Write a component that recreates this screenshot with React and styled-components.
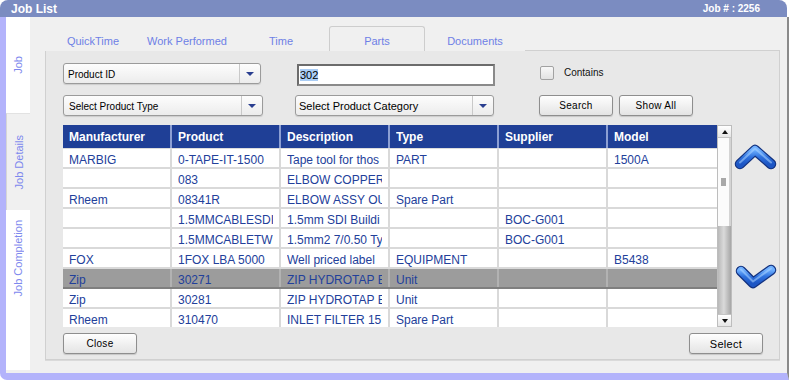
import React from 'react';
import styled, { createGlobalStyle } from 'styled-components';

const Global = createGlobalStyle`
  html, body { margin: 0; padding: 0; background: #ffffff; }
  body { font-family: "Liberation Sans", Arial, sans-serif; }
  * { box-sizing: border-box; }
`;

const Window = styled.div`
  width: 789px;
  height: 380px;
  display: flex;
  flex-direction: column;
`;

const TitleBar = styled.div`
  height: 17px;
  flex: none;
  background: #7b8cc1;
  border-radius: 8px 8px 0 0;
  margin-right: 2px;
  display: flex;
  align-items: center;
  justify-content: space-between;
  padding: 0 27px 0 11px;
  color: #ffffff;
  font-weight: bold;
`;

const Title = styled.span`
  font-size: 12px;
`;

const JobNo = styled.span`
  font-size: 10px;
`;

const Body = styled.div`
  flex: 1;
  display: flex;
  border-left: 6px solid #b3b3fb;
  border-bottom: 7px solid #b3b3fb;
  border-right: 2px solid #8a8a8a;
  border-bottom-left-radius: 7px;
  overflow: hidden;
`;

const SideTabs = styled.div`
  width: 24px;
  flex: none;
  background: #ffffff;
  display: flex;
  flex-direction: column;
`;

const SideTab = styled.div`
  height: ${p => p.$h}px;
  display: flex;
  align-items: center;
  justify-content: center;
  background: ${p => (p.$active ? '#f0f0f0' : '#ffffff')};
  border-left: ${p => (p.$active ? '1px solid #d6d6d6' : 'none')};
  border-top: ${p => (p.$active ? '1px solid #e2e2e2' : 'none')};
`;

const SideLabel = styled.span`
  writing-mode: vertical-rl;
  transform: rotate(180deg);
  font-size: 11px;
  color: #7d88ee;
  white-space: nowrap;
`;

const SideFill = styled.div`
  flex: 1;
  border-bottom: 3px solid #f0f0f0;
`;

const Content = styled.div`
  flex: 1;
  min-width: 0;
  background: #f0f0f0;
  padding: 9px 7px 13px 15px;
  display: flex;
  flex-direction: column;
`;

const TopTabs = styled.div`
  height: 24px;
  display: flex;
  flex: none;
`;

const TopTab = styled.div`
  width: ${p => p.$w}px;
  height: 25px;
  padding-top: 3px;
  display: flex;
  align-items: center;
  justify-content: center;
  font-size: 11px;
  color: #6e80e6;
  background: #f0f0f0;
  border: ${p => (p.$active ? '1px solid #cdcdcd' : '1px solid transparent')};
  border-bottom: none;
  border-radius: 3px 3px 0 0;
  position: relative;
  z-index: 1;
`;

const Panel = styled.div`
  flex: 1;
  background: #e8e8e8;
  border: 1px solid #d0d0d0;
  box-shadow: 0 1px 0 #dadada;
  padding: 12px 0 0 17px;
  display: flex;
  flex-direction: column;
`;

const Controls = styled.div`
  display: grid;
  grid-template-columns: 200px 200px 1fr;
  grid-template-rows: 23px 21px;
  column-gap: 32px;
  row-gap: 9px;
`;

const Cell = styled.div`
  display: flex;
  align-items: flex-start;
  padding-left: ${p => p.$pl || 0}px;
  gap: ${p => p.$gap || 0}px;
`;

const SelectBox = styled.div`
  width: ${p => p.$w}px;
  height: 21px;
  display: flex;
  border: 1px solid #9b9b9b;
  border-radius: 3px;
  background: linear-gradient(#fdfdfd, #ececec);
  box-shadow: 0 1px 1px rgba(0, 0, 0, 0.12);
`;

const SelectText = styled.div`
  flex: 1;
  display: flex;
  align-items: center;
  padding-left: ${p => p.$pl || 4}px;
  padding-top: 1px;
  font-size: ${p => p.$fs || 10}px;
  color: #000;
  white-space: nowrap;
`;

const SelectArrow = styled.div`
  width: 21px;
  border-left: 1px solid #c9c9c9;
  display: flex;
  align-items: center;
  justify-content: center;
  &::after {
    content: '';
    border-left: 4px solid transparent;
    border-right: 4px solid transparent;
    border-top: 4px solid #2a3f90;
  }
`;

const TextInput = styled.div`
  width: 200px;
  height: 22px;
  margin: 1px 0 0 2px;
  border: 2px solid #6c6c6c;
  border-right-color: #8a8a8a;
  border-bottom-color: #8a8a8a;
  background: #ffffff;
  display: flex;
  align-items: center;
  padding-left: 1px;
  font-size: 11px;
  color: #000;
`;

const Selected = styled.span`
  background: #aacdf5;
  line-height: 12px;
`;

const Check = styled.div`
  width: 14px;
  height: 14px;
  margin-top: 3px;
  border: 1px solid #a2a2a2;
  border-radius: 2px;
  background: linear-gradient(#f8f8f8, #e2e2e2);
`;

const CheckLabel = styled.span`
  font-size: 10px;
  margin-top: 4px;
  color: #111;
`;

const Button = styled.button`
  width: 74px;
  height: 21px;
  padding: 0;
  border: 1px solid #8e8e8e;
  border-radius: 3px;
  background: linear-gradient(#fefefe, #e4e4e4);
  box-shadow: 0 1px 1px rgba(0, 0, 0, 0.15);
  font-family: "Liberation Sans", Arial, sans-serif;
  font-size: ${p => p.$fs || 10}px;
  color: #000;
  letter-spacing: 0.3px;
`;

const TableArea = styled.div`
  margin-top: 9px;
  height: 202px;
  display: flex;
`;

const Table = styled.div`
  width: 654px;
  height: 202px;
  flex: none;
  overflow: hidden;
  background: #d9d9d9;
`;

const Row = styled.div`
  display: grid;
  grid-template-columns: repeat(6, 109px);
  height: ${p => (p.$head ? 24 : 20)}px;
  background: ${p => (p.$head ? '#1f3f96' : p.$sel ? '#9c9c9c' : '#ffffff')};
  border-bottom: ${p => (p.$head ? '1px solid #dcdcdc' : p.$sel ? '2px solid #7f7f7f' : '2px solid #d9d9d9')};
`;

const Td = styled.div`
  padding: ${p => (p.$head ? '0 6px' : '3px 6px 0')};
  display: flex;
  align-items: center;
  min-width: 0;
  font-size: 12px;
  color: ${p => (p.$head ? '#ffffff' : '#22409a')};
  font-weight: ${p => (p.$head ? 'bold' : 'normal')};
  border-right: 2px solid ${p => (p.$head ? '#8c9fd3' : p.$sel ? '#b2b2b2' : '#d9d9d9')};
  &:last-child { border-right: none; }
`;

const CellText = styled.span`
  display: block;
  width: 100%;
  overflow: hidden;
  white-space: nowrap;
`;

const Scrollbar = styled.div`
  width: 15px;
  height: 202px;
  flex: none;
  display: flex;
  flex-direction: column;
  border: 1px solid #bdbdbd;
  background: #f6f6f6;
`;

const ScrollBtn = styled.div`
  height: 12px;
  flex: none;
  background: linear-gradient(#ffffff, #e6e6e6);
  border-bottom: ${p => (p.$down ? 'none' : '1px solid #c4c4c4')};
  border-top: ${p => (p.$down ? '1px solid #c4c4c4' : 'none')};
  display: flex;
  align-items: center;
  justify-content: center;
  &::after {
    content: '';
    border-left: 3px solid transparent;
    border-right: 3px solid transparent;
    ${p => (p.$down ? 'border-top: 4px solid #111;' : 'border-bottom: 4px solid #111;')}
  }
`;

const Thumb = styled.div`
  height: 88px;
  flex: none;
  background: #fbfbfb;
  border-right: 2px solid #d4d4d4;
  display: flex;
  align-items: center;
  justify-content: center;
  &::after {
    content: '';
    width: 5px;
    height: 8px;
    background: #a8a8a8;
  }
`;

const Track = styled.div`
  flex: 1;
  background: linear-gradient(90deg, #b8b8b8, #dadada 45%, #a6a6a6);
`;

const Arrows = styled.div`
  width: 46px;
  flex: none;
  margin-left: 1px;
  display: flex;
  flex-direction: column;
  padding-top: 18px;
  gap: 89px;
`;

const Footer = styled.div`
  margin-top: 6px;
  display: flex;
  justify-content: space-between;
  padding-right: 16px;
`;

const Chevron = ({ d, id }) => (
  <svg width="46" height="30" viewBox="0 0 46 30">
    <defs>
      <linearGradient id={id} x1="0" y1="0" x2="0" y2="1">
        <stop offset="0" stopColor="#6fb0ff" />
        <stop offset="0.5" stopColor="#2f72de" />
        <stop offset="1" stopColor="#1d56c4" />
      </linearGradient>
    </defs>
    <path d={d} fill="none" stroke="#13327f" strokeWidth="10.5" strokeLinecap="round" strokeLinejoin="round" />
    <path d={d} fill="none" stroke={`url(#${id})`} strokeWidth="8" strokeLinecap="round" strokeLinejoin="round" />
    <path d={d} fill="none" stroke="#a9d3ff" strokeOpacity="0.55" strokeWidth="2" strokeLinecap="round" strokeLinejoin="round" transform="translate(0,-1.5)" />
  </svg>
);

const rows = [
  ['MARBIG', '0-TAPE-IT-1500', 'Tape tool for thos', 'PART', '', '1500A'],
  ['', '083', 'ELBOW COPPER', '', '', ''],
  ['Rheem', '08341R', 'ELBOW ASSY OU', 'Spare Part', '', ''],
  ['', '1.5MMCABLESDI', '1.5mm SDI Buildi', '', 'BOC-G001', ''],
  ['', '1.5MMCABLETWI', '1.5mm2 7/0.50 Ty', '', 'BOC-G001', ''],
  ['FOX', '1FOX LBA 5000', 'Well priced label', 'EQUIPMENT', '', 'B5438'],
  ['Zip', '30271', 'ZIP HYDROTAP E', 'Unit', '', ''],
  ['Zip', '30281', 'ZIP HYDROTAP E', 'Unit', '', ''],
  ['Rheem', '310470', 'INLET FILTER 15', 'Spare Part', '', ''],
];

const headers = ['Manufacturer', 'Product', 'Description', 'Type', 'Supplier', 'Model'];

const topTabs = [
  ['QuickTime', 96],
  ['Work Performed', 92],
  ['Time', 96],
  ['Parts', 96],
  ['Documents', 100],
];

export default function App() {
  return (
    <>
      <Global />
      <Window>
        <TitleBar>
          <Title>Job List</Title>
          <JobNo>Job # : 2256</JobNo>
        </TitleBar>
        <Body>
          <SideTabs>
            <SideTab $h={96}><SideLabel>Job</SideLabel></SideTab>
            <SideTab $h={97} $active><SideLabel>Job Details</SideLabel></SideTab>
            <SideTab $h={97}><SideLabel>Job Completion</SideLabel></SideTab>
            <SideFill />
          </SideTabs>
          <Content>
            <TopTabs>
              {topTabs.map(([t, w]) => (
                <TopTab key={t} $w={w} $active={t === 'Parts'}>{t}</TopTab>
              ))}
            </TopTabs>
            <Panel>
              <Controls>
                <Cell>
                  <SelectBox $w={198}>
                    <SelectText>Product ID</SelectText>
                    <SelectArrow />
                  </SelectBox>
                </Cell>
                <Cell>
                  <TextInput><Selected>302</Selected></TextInput>
                </Cell>
                <Cell $pl={13} $gap={10}>
                  <Check />
                  <CheckLabel>Contains</CheckLabel>
                </Cell>
                <Cell>
                  <SelectBox $w={200}>
                    <SelectText $pl={5}>Select Product Type</SelectText>
                    <SelectArrow />
                  </SelectBox>
                </Cell>
                <Cell>
                  <SelectBox $w={199}>
                    <SelectText $fs={11} $pl={3}>Select Product Category</SelectText>
                    <SelectArrow />
                  </SelectBox>
                </Cell>
                <Cell $pl={12} $gap={6}>
                  <Button>Search</Button>
                  <Button>Show All</Button>
                </Cell>
              </Controls>
              <TableArea>
                <Table>
                  <Row $head>
                    {headers.map(h => <Td key={h} $head><CellText>{h}</CellText></Td>)}
                  </Row>
                  {rows.map((r, i) => (
                    <Row key={i} $sel={i === 6}>
                      {r.map((c, j) => (
                        <Td key={j} $sel={i === 6}><CellText>{c}</CellText></Td>
                      ))}
                    </Row>
                  ))}
                </Table>
                <Scrollbar>
                  <ScrollBtn />
                  <Thumb />
                  <Track />
                  <ScrollBtn $down />
                </Scrollbar>
                <Arrows>
                  <Chevron id="gup" d="M7 21 L22 7 L38 21" />
                  <Chevron id="gdn" d="M8 9 L20 21 L38 8" />
                </Arrows>
              </TableArea>
              <Footer>
                <Button>Close</Button>
                <Button $fs={11}>Select</Button>
              </Footer>
            </Panel>
          </Content>
        </Body>
      </Window>
    </>
  );
}
